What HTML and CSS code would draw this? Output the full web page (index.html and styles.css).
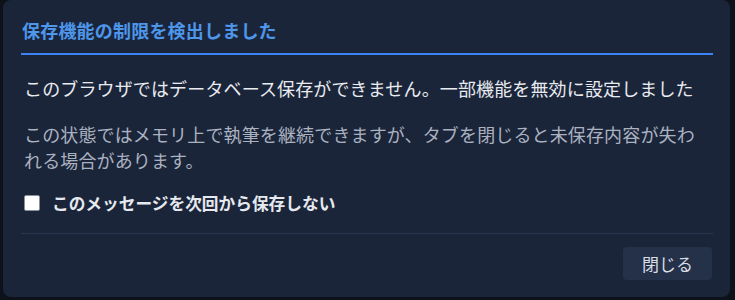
FILE: index.html
```html
<!DOCTYPE html>
<html lang="ja">
<head>
<meta charset="utf-8">
<link rel="stylesheet" href="styles.css">
</head>
<body>
<div class="dialog">
  <div class="dialog-header">
    <h2 class="dialog-title">保存機能の制限を検出しました</h2>
  </div>
  <div class="dialog-body">
    <p class="lead">このブラウザではデータベース保存ができません。一部機能を無効に設定しました</p>
    <p class="note">この状態ではメモリ上で執筆を継続できますが、タブを閉じると未保存内容が失われる場合があります。</p>
    <label class="check-row"><span class="checkbox"></span><span class="check-label">このメッセージを次回から保存しない</span></label>
  </div>
  <div class="dialog-footer">
    <button class="btn-close">閉じる</button>
  </div>
</div>
</body>
</html>
```
FILE: styles.css
```css
html, body {
  margin: 0;
  padding: 0;
  background: #0d1119;
  font-family: "Noto Sans CJK JP", "Noto Sans", sans-serif;
}
.dialog {
  margin-left: 3px;
  width: 727px;
  height: 297px;
  box-sizing: border-box;
  background: #1b253a;
  border-radius: 8px;
  padding: 0 17px 0 18px;
  display: flex;
  flex-direction: column;
}
.dialog-header {
  padding-top: 16px;
  padding-bottom: 9px;
  border-bottom: 2px solid #3b82f6;
}
.dialog-title {
  margin: 0;
  font-size: 18px;
  line-height: 28px;
  font-weight: 700;
  letter-spacing: 0.2px;
  color: #4d96ea;
  padding-left: 1px;
}
.dialog-body {
  padding-left: 3px;
  border-bottom: 1px solid #2a3650;
  padding-bottom: 17px;
}
.lead {
  margin: 19px 0 0 0;
  font-size: 18px;
  line-height: 28px;
  letter-spacing: 0.14px;
  color: #e8ebf0;
}
.note {
  margin: 19px 0 0 0;
  max-width: 678px;
  font-size: 18px;
  line-height: 26px;
  letter-spacing: 0.14px;
  color: #aab2c0;
}
.check-row {
  margin-top: 17px;
  height: 26px;
  display: flex;
  align-items: center;
  gap: 12px;
}
.checkbox {
  width: 14px;
  height: 14px;
  background: #ffffff;
  border: 1px solid #8a8f98;
  border-radius: 2px;
  flex: none;
}
.check-label {
  font-size: 16.7px;
  font-weight: 700;
  color: #e6e9ef;
  line-height: 26px;
}
.dialog-footer {
  display: flex;
  justify-content: flex-end;
  padding-top: 13px;
}
.btn-close {
  width: 89px;
  height: 33px;
  margin-right: 1px;
  border: none;
  border-radius: 4px;
  background: #253149;
  color: #d8dde6;
  font-family: "Noto Sans CJK JP", "Noto Sans", sans-serif;
  font-size: 17px;
  padding: 0;
}
```
